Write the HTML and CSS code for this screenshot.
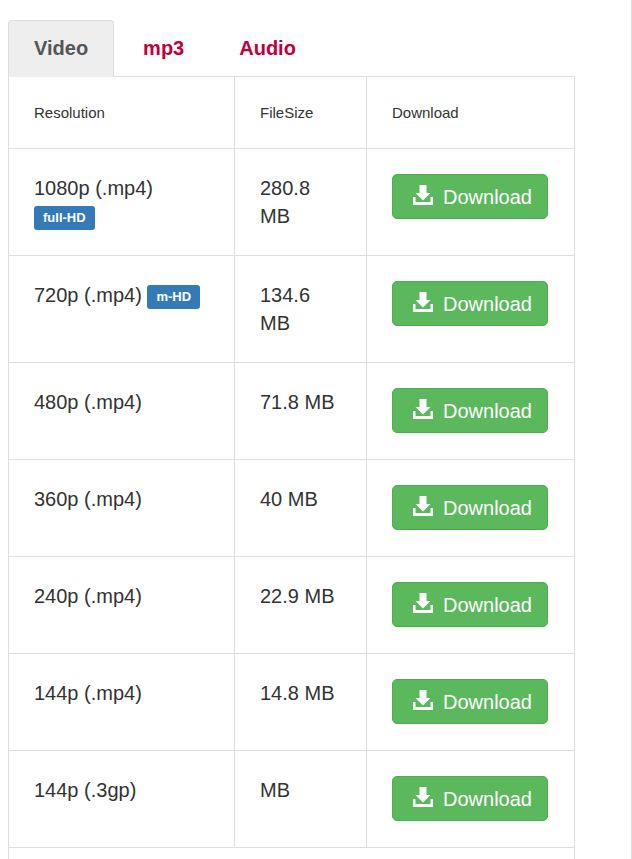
FILE: index.html
```html
<!DOCTYPE html>
<html lang="en">

<head>
    <meta charset="UTF-8">
    <title>Download Video</title>
    <link rel="stylesheet" href="styles.css">
</head>

<body>
    <svg class="icon-defs" width="0" height="0">
        <symbol id="icon-download" viewBox="0 0 20 20">
            <path d="M6.500 0h7v8h4l-7.500 7.500L2.500 8h4z" />
            <path d="M0 12h2.500v5h15v-5H20v8H0z" />
        </symbol>
    </svg>

    <div class="container">
        <ul class="tabs">
            <li class="active"><a href="#">Video</a></li>
            <li><a href="#">mp3</a></li>
            <li><a href="#">Audio</a></li>
        </ul>

        <table class="dl-table">
            <thead>
                <tr>
                    <th class="col-res">Resolution</th>
                    <th class="col-size">FileSize</th>
                    <th class="col-dl">Download</th>
                </tr>
            </thead>
            <tbody>
                <tr>
                    <td>1080p (.mp4) <span class="label">full-HD</span></td>
                    <td>280.8 MB</td>
                    <td><a class="btn" href="#"><svg class="icon"><use href="#icon-download" /></svg>Download</a></td>
                </tr>
                <tr>
                    <td>720p (.mp4) <span class="label">m-HD</span></td>
                    <td>134.6 MB</td>
                    <td><a class="btn" href="#"><svg class="icon"><use href="#icon-download" /></svg>Download</a></td>
                </tr>
                <tr>
                    <td>480p (.mp4)</td>
                    <td>71.8 MB</td>
                    <td><a class="btn" href="#"><svg class="icon"><use href="#icon-download" /></svg>Download</a></td>
                </tr>
                <tr>
                    <td>360p (.mp4)</td>
                    <td>40 MB</td>
                    <td><a class="btn" href="#"><svg class="icon"><use href="#icon-download" /></svg>Download</a></td>
                </tr>
                <tr>
                    <td>240p (.mp4)</td>
                    <td>22.9 MB</td>
                    <td><a class="btn" href="#"><svg class="icon"><use href="#icon-download" /></svg>Download</a></td>
                </tr>
                <tr>
                    <td>144p (.mp4)</td>
                    <td>14.8 MB</td>
                    <td><a class="btn" href="#"><svg class="icon"><use href="#icon-download" /></svg>Download</a></td>
                </tr>
                <tr>
                    <td>144p (.3gp)</td>
                    <td>MB</td>
                    <td><a class="btn" href="#"><svg class="icon"><use href="#icon-download" /></svg>Download</a></td>
                </tr>
                <tr>
                    <td class="last-row" colspan="3"></td>
                </tr>
            </tbody>
        </table>
    </div>
</body>

</html>
```

FILE: styles.css
```css
html {
    height: 100%;
    overflow: hidden;
}

body {
    font-family: "Liberation Sans", Arial, sans-serif;
    color: #333;
    background-color: #fff;
    box-sizing: border-box;
    height: 100%;
    margin: 0;
    padding: 20px 0 0 8px;
    border-right: 1px solid #ddd;
}

.icon-defs {
    display: block;
    position: absolute;
}

.container {
    width: 567px;
}

.tabs {
    display: flex;
    list-style: none;
    margin: 0;
    padding: 0;
    border-bottom: 1px solid #ddd;
}

.tabs li {
    margin-right: 3px;
    margin-bottom: -1px;
}

.tabs a {
    display: block;
    padding: 12px 25px 14px;
    font-size: 20px;
    font-weight: bold;
    line-height: 30px;
    color: #c0003c;
    text-decoration: none;
    border: 1px solid transparent;
    border-bottom: none;
    border-radius: 4px 4px 0 0;
}

.tabs .active a {
    color: #555;
    background-color: #eee;
    border-color: #ddd;
}

.dl-table {
    width: 567px;
    table-layout: fixed;
    border-collapse: collapse;
    font-size: 20px;
    line-height: 28px;
}

.dl-table th,
.dl-table td {
    box-sizing: border-box;
    padding: 25px;
    border: 1px solid #ddd;
    text-align: left;
    vertical-align: top;
}

.dl-table thead th {
    padding-bottom: 24px;
    border-top: none;
    font-size: 15px;
    font-weight: normal;
    line-height: 22px;
}

.col-res {
    width: 226px;
}

.col-size {
    width: 132px;
}

.label {
    display: inline-block;
    padding: 5px 9px;
    font-size: 13px;
    font-weight: bold;
    line-height: 14px;
    color: #fff;
    vertical-align: 1px;
    background-color: #337ab7;
    border-radius: 3px;
}

.btn {
    display: flex;
    align-items: center;
    width: 156px;
    height: 45px;
    box-sizing: border-box;
    margin-bottom: 1px;
    padding-left: 20px;
    color: #fff;
    text-decoration: none;
    background-color: #5cb85c;
    border: 1px solid #4cae4c;
    border-radius: 5px;
}

.icon {
    width: 20px;
    height: 20px;
    margin-right: 10px;
    margin-top: -3px;
    fill: #fff;
}

.dl-table .last-row {
    height: 12px;
    padding: 0;
    border-bottom: none;
}
```
